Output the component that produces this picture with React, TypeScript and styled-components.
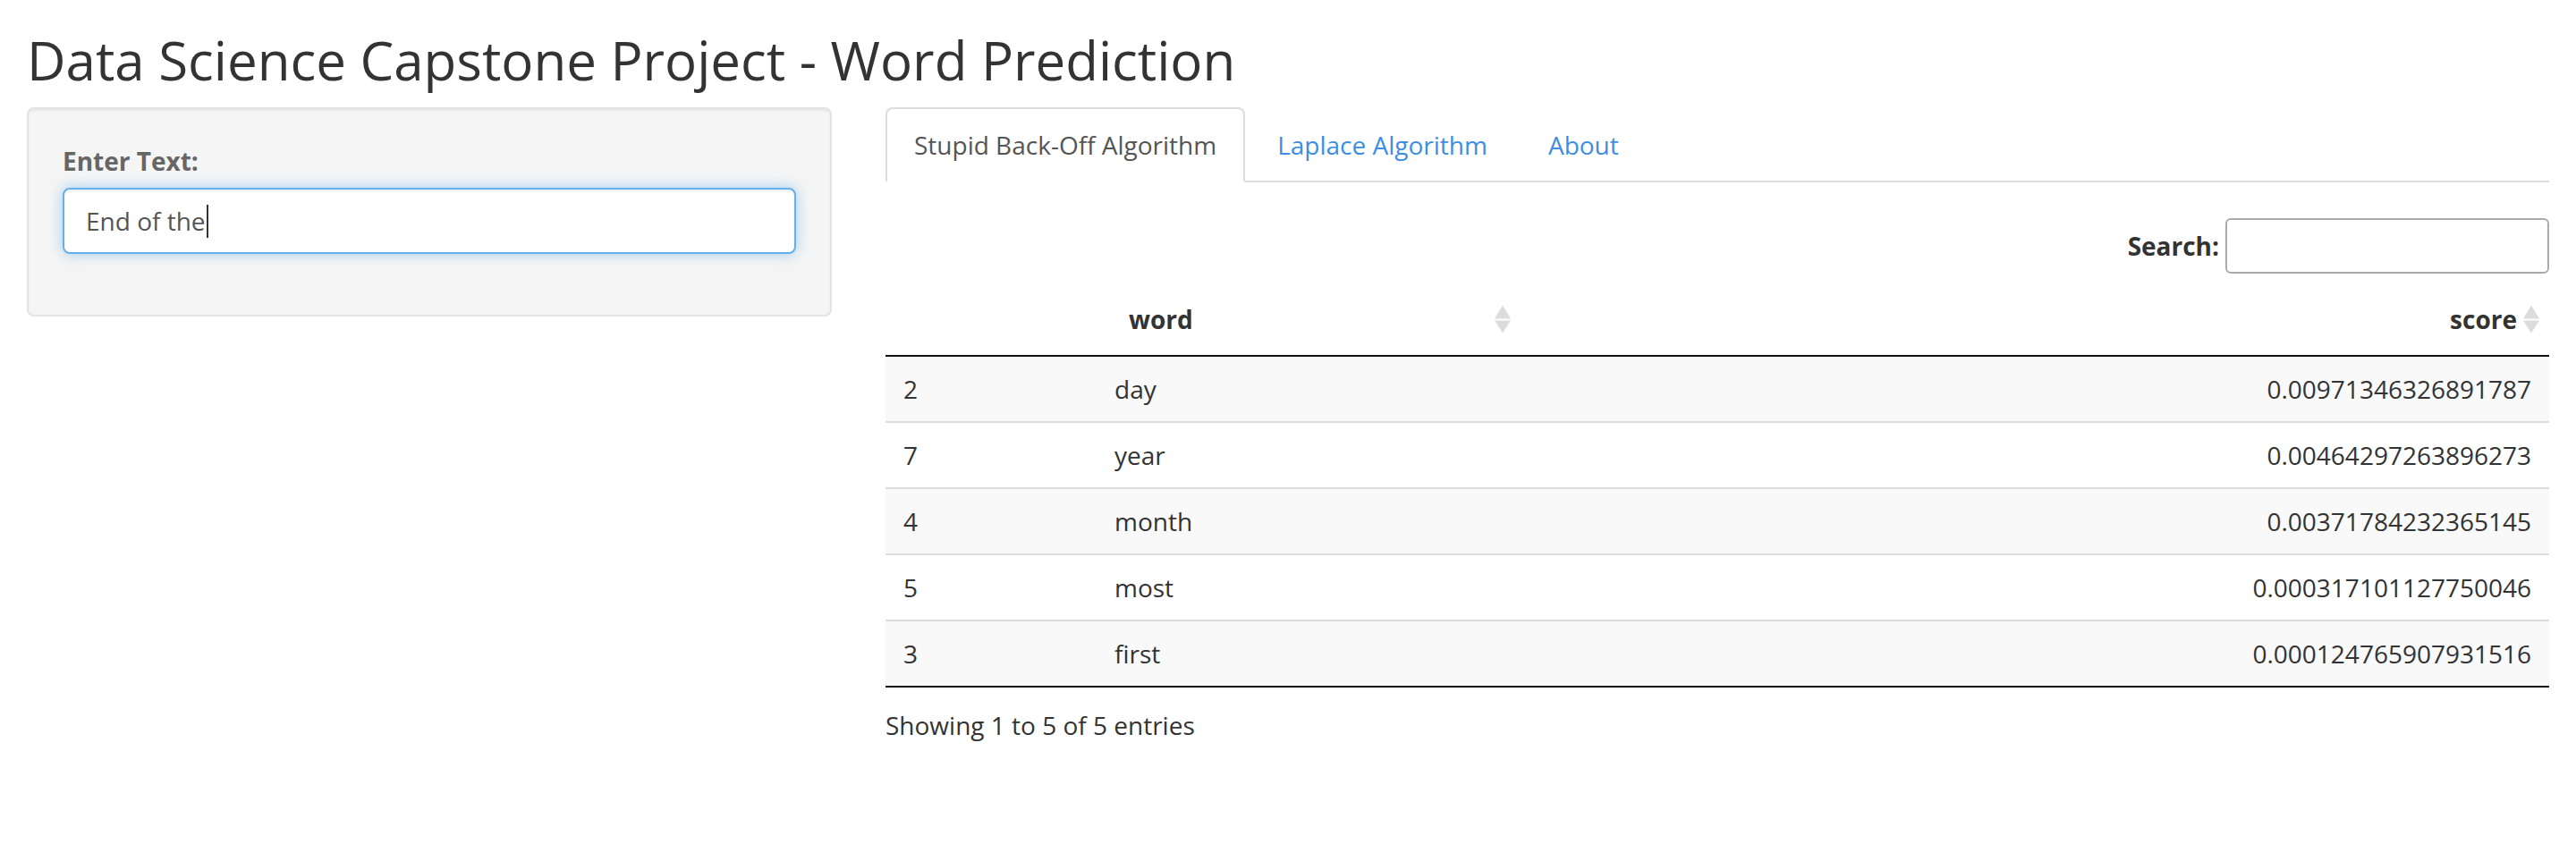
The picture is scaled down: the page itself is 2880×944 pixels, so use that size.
import React from "react";
import styled, { createGlobalStyle } from "styled-components";

const GlobalStyle = createGlobalStyle`
  html, body { margin: 0; padding: 0; background: #fff; }
  body {
    font-family: "Open Sans", "Noto Sans", "Liberation Sans", sans-serif;
    font-size: 28px;
    line-height: 40px;
    color: #333;
  }
  * { box-sizing: border-box; }
`;

const Page = styled.div`
  padding: 0 30px;
`;

const Title = styled.h2`
  margin: 34px 0 20px;
  font-size: 60px;
  font-weight: 400;
  line-height: 66px;
  color: #333;
`;

const Row = styled.div`
  display: flex;
  margin: 0 -30px;
`;

const Col = styled.div<{ $span: number }>`
  width: ${(p) => (p.$span / 12) * 100}%;
  padding: 0 30px;
`;

const Well = styled.div`
  padding: 38px;
  margin-bottom: 40px;
  background: #f5f5f5;
  border: 2px solid #e3e3e3;
  border-radius: 8px;
  box-shadow: inset 0 2px 2px rgba(0, 0, 0, 0.05);
`;

const FormGroup = styled.div`
  margin-bottom: 30px;
`;

const Label = styled.label`
  display: block;
  font-weight: 700;
  margin-bottom: 10px;
  color: #666;
`;

const TextBox = styled.div`
  display: flex;
  align-items: center;
  height: 74px;
  padding: 0 24px;
  background: #fff;
  color: #555;
  border: 2px solid #66afe9;
  border-radius: 8px;
  box-shadow: inset 0 2px 2px rgba(0, 0, 0, 0.075), 0 0 16px rgba(102, 175, 233, 0.6);
`;

const Caret = styled.span`
  display: inline-block;
  width: 2px;
  height: 37px;
  margin-left: 1px;
  background: #333;
`;

const Tabs = styled.ul`
  display: flex;
  list-style: none;
  margin: 0;
  padding: 0;
  border-bottom: 2px solid #ddd;
`;

const Tab = styled.li<{ $active?: boolean }>`
  margin: 0 4px -2px 0;
  padding: 20px 30px;
  border: 2px solid ${(p) => (p.$active ? "#ddd" : "transparent")};
  border-bottom-color: ${(p) => (p.$active ? "#fff" : "transparent")};
  border-radius: 8px 8px 0 0;
  background: ${(p) => (p.$active ? "#fff" : "transparent")};
  color: ${(p) => (p.$active ? "#555" : "#3d8ee0")};
`;

const FilterRow = styled.div`
  display: flex;
  justify-content: flex-end;
  align-items: center;
  margin-top: 40px;
`;

const FilterLabel = styled.span`
  font-weight: 700;
  margin-right: 7px;
`;

const SearchInput = styled.input`
  width: 362px;
  height: 62px;
  padding: 10px;
  border: 2px solid #aaa;
  border-radius: 6px;
  background: transparent;
  font: inherit;
`;

const Table = styled.table`
  width: 100%;
  margin-top: 11px;
  border-collapse: collapse;
  table-layout: fixed;
  border-bottom: 2px solid #111;
`;

const Th = styled.th<{ $align?: string }>`
  position: relative;
  padding: 20px 36px;
  text-align: ${(p) => p.$align || "left"};
  font-weight: 700;
  border-bottom: 2px solid #111;
`;

const TBody = styled.tbody`
  tr + tr td { border-top: 2px solid #ddd; }
`;

const Tr = styled.tr<{ $odd: boolean }>`
  background: ${(p) => (p.$odd ? "#f9f9f9" : "#fff")};
`;

const Td = styled.td<{ $align?: string }>`
  padding: 16px 20px;
  text-align: ${(p) => p.$align || "left"};
`;

const SortIcon = styled.svg`
  position: absolute;
  right: 11px;
  top: 50%;
  transform: translateY(-50%);
`;

const Info = styled.div`
  padding-top: 22px;
`;

const Sort = () => (
  <SortIcon width="18" height="31" viewBox="0 0 18 31">
    <polygon points="9,0 18,15 0,15" fill="#dcdcdc" />
    <polygon points="0,17 18,17 9,31" fill="#dcdcdc" />
  </SortIcon>
);

const rows = [
  { id: 2, word: "day", score: "0.00971346326891787" },
  { id: 7, word: "year", score: "0.00464297263896273" },
  { id: 4, word: "month", score: "0.00371784232365145" },
  { id: 5, word: "most", score: "0.000317101127750046" },
  { id: 3, word: "first", score: "0.000124765907931516" },
];

export default function App() {
  return (
    <>
      <GlobalStyle />
      <Page>
        <Title>Data Science Capstone Project - Word Prediction</Title>
        <Row>
          <Col $span={4}>
            <Well>
              <FormGroup>
                <Label>Enter Text:</Label>
                <TextBox role="textbox">
                  End of the
                  <Caret />
                </TextBox>
              </FormGroup>
            </Well>
          </Col>
          <Col $span={8}>
            <Tabs>
              <Tab $active>Stupid Back-Off Algorithm</Tab>
              <Tab>Laplace Algorithm</Tab>
              <Tab>About</Tab>
            </Tabs>
            <FilterRow>
              <FilterLabel>Search:</FilterLabel>
              <SearchInput type="search" />
            </FilterRow>
            <Table>
              <colgroup>
                <col style={{ width: "236px" }} />
                <col style={{ width: "474px" }} />
                <col />
              </colgroup>
              <thead>
                <tr>
                  <Th></Th>
                  <Th>
                    word
                    <Sort />
                  </Th>
                  <Th $align="right">
                    score
                    <Sort />
                  </Th>
                </tr>
              </thead>
              <TBody>
                {rows.map((r, i) => (
                  <Tr key={r.id} $odd={i % 2 === 0}>
                    <Td>{r.id}</Td>
                    <Td>{r.word}</Td>
                    <Td $align="right">{r.score}</Td>
                  </Tr>
                ))}
              </TBody>
            </Table>
            <Info>Showing 1 to 5 of 5 entries</Info>
          </Col>
        </Row>
      </Page>
    </>
  );
}
